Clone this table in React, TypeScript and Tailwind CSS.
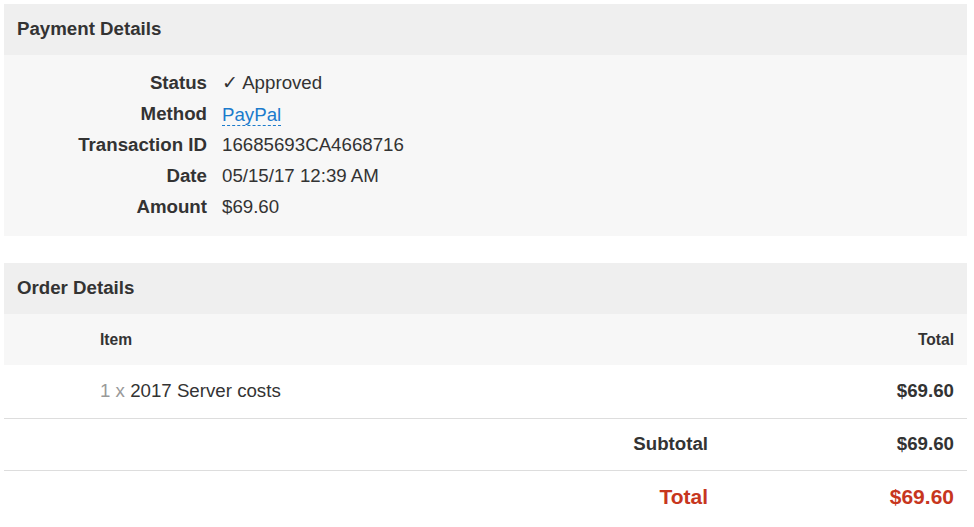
import { Fragment } from 'react';

const payment = [
  { label: 'Status', value: '✓ Approved' },
  { label: 'Method', value: 'PayPal', link: true },
  { label: 'Transaction ID', value: '16685693CA4668716' },
  { label: 'Date', value: '05/15/17 12:39 AM' },
  { label: 'Amount', value: '$69.60' },
];

export default function App() {
  return (
    <div className="min-h-screen bg-white pl-[4px] pt-[4px] pr-[7px] text-[#333] font-['Liberation_Sans',Arial,sans-serif]">
      {/* Payment */}
      <section className="bg-[#f7f7f7]">
        <div className="h-[51px] bg-[#efefef] px-[13px] flex items-center">
          <h2 className="text-[18.7px] font-bold">Payment Details</h2>
        </div>
        <div className="grid grid-cols-[203px_1fr] gap-x-[15px] py-[13px] text-[18.7px]">
          {payment.map((row) => (
            <Fragment key={row.label}>
              <div className="h-[31px] flex items-center justify-end font-bold">{row.label}</div>
              <div className="h-[31px] flex items-center">
                {row.link ? (
                  <a href="#" className="text-[#1b7bcc] border-b border-dashed border-[#1b7bcc] leading-[21px]">
                    {row.value}
                  </a>
                ) : (
                  row.value
                )}
              </div>
            </Fragment>
          ))}
        </div>
      </section>

      {/* Order */}
      <section className="mt-[27px]">
        <div className="h-[51px] bg-[#efefef] px-[13px] flex items-center">
          <h2 className="text-[18.7px] font-bold">Order Details</h2>
        </div>
        <div className="h-[51px] bg-[#f7f7f7] text-[15.6px] font-bold flex items-center justify-between pl-[96px] pr-[13px]">
          <span>Item</span>
          <span>Total</span>
        </div>
        <div className="h-[54px] border-b border-[#ddd] text-[18.7px] flex items-center justify-between pl-[96px] pr-[13px]">
          <span>
            <span className="text-[#999]">1 x</span> 2017 Server costs
          </span>
          <span className="font-bold">$69.60</span>
        </div>
        <div className="h-[52px] border-b border-[#ddd] text-[18.7px] font-bold grid grid-cols-[1fr_259px] items-center">
          <span className="text-right">Subtotal</span>
          <span className="text-right pr-[13px]">$69.60</span>
        </div>
        <div className="h-[52px] text-[21px] font-bold text-[#c7361e] grid grid-cols-[1fr_259px] items-center">
          <span className="text-right">Total</span>
          <span className="text-right pr-[13px]">$69.60</span>
        </div>
      </section>
    </div>
  );
}
